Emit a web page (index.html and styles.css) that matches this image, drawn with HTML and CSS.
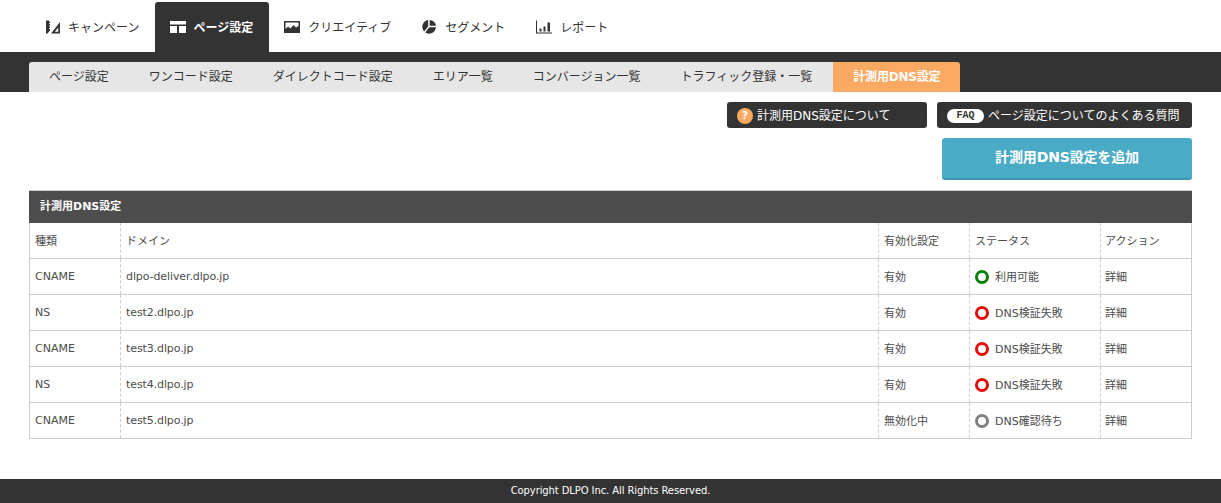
FILE: index.html
```html
<!DOCTYPE html>
<html lang="ja">
<head>
<meta charset="utf-8">
<title>計測用DNS設定</title>
<link rel="stylesheet" href="styles.css">
</head>
<body>
<header>
  <nav class="main-nav">
    <a class="main-tab pad-end">
      <svg class="nav-icon" viewBox="0 0 14 13"><path fill-rule="evenodd" d="M0 0h3v1h1v1.500H3v1h1V5H3v1h1v1.500H3v1h1V10L1.500 13H0z M5 13L14 1.500V13z M8.800 11.300h3.500V7z" fill="#333"/></svg>キャンペーン</a>
    <a class="main-tab active">
      <svg class="nav-icon wide" viewBox="0 0 16 12"><path d="M0 0h16v3.500H0z M0 5h7v7H0z M9 5h7v7H9z" fill="#fff"/></svg>ページ設定</a>
    <a class="main-tab">
      <svg class="nav-icon wide" viewBox="0 0 16 12"><path fill-rule="evenodd" d="M0 0h16v12H0z M1.500 1.500V8L4 5.500 6.500 7.500 9.500 4 12 6.500 14.500 5V1.500z" fill="#333"/></svg>クリエイティブ</a>
    <a class="main-tab pad-end">
      <svg class="nav-icon wide" viewBox="0 0 16 14"><path d="M7.200 0v6.500L3 11.500A7 7 0 0 1 7.200 0z M8.700 0A6.500 6.500 0 0 1 15 5.800H8.700z M8.300 7.300H15A7 7 0 0 1 4.200 12.500z" fill="#333"/></svg>セグメント</a>
    <a class="main-tab">
      <svg class="nav-icon wide" viewBox="0 0 16 13"><path d="M0 0h1v12h15v1H0z M3.500 8h2v3h-2z M7.500 6h2v5h-2z M11.500 2h2.500v9h-2.500z" fill="#333"/></svg>レポート</a>
  </nav>
  <nav class="sub-nav">
    <a class="sub-tab first">ページ設定</a>
    <a class="sub-tab">ワンコード設定</a>
    <a class="sub-tab">ダイレクトコード設定</a>
    <a class="sub-tab">エリア一覧</a>
    <a class="sub-tab">コンバージョン一覧</a>
    <a class="sub-tab traffic">トラフィック登録・一覧</a>
    <a class="sub-tab current">計測用DNS設定</a>
  </nav>
</header>
<main>
  <div class="help-row">
    <a class="help-btn about"><span class="q-mark">?</span>計測用DNS設定について</a>
    <a class="help-btn faq"><span class="faq-pill">FAQ</span>ページ設定についてのよくある質問</a>
  </div>
  <div class="add-row"><a class="add-btn">計測用DNS設定を追加</a></div>
  <section class="panel">
    <h2 class="panel-title">計測用DNS設定</h2>
    <table class="dns-table">
      <colgroup><col class="c-type"><col class="c-domain"><col class="c-enabled"><col class="c-status"><col class="c-action"></colgroup>
      <thead>
        <tr><th>種類</th><th>ドメイン</th><th>有効化設定</th><th>ステータス</th><th>アクション</th></tr>
      </thead>
      <tbody>
        <tr><td>CNAME</td><td class="domain">dlpo-deliver.dlpo.jp</td><td>有効</td><td><span class="ring ok"></span>利用可能</td><td>詳細</td></tr>
        <tr><td>NS</td><td class="domain">test2.dlpo.jp</td><td>有効</td><td><span class="ring fail"></span>DNS検証失敗</td><td>詳細</td></tr>
        <tr><td>CNAME</td><td class="domain">test3.dlpo.jp</td><td>有効</td><td><span class="ring fail"></span>DNS検証失敗</td><td>詳細</td></tr>
        <tr><td>NS</td><td class="domain">test4.dlpo.jp</td><td>有効</td><td><span class="ring fail"></span>DNS検証失敗</td><td>詳細</td></tr>
        <tr><td>CNAME</td><td class="domain">test5.dlpo.jp</td><td>無効化中</td><td><span class="ring wait"></span>DNS確認待ち</td><td>詳細</td></tr>
      </tbody>
    </table>
  </section>
</main>
<footer class="site-footer">Copyright DLPO Inc. All Rights Reserved.</footer>
</body>
</html>
```
FILE: styles.css
```css
* { box-sizing: border-box; }
html, body { margin: 0; padding: 0; }
body {
  width: 1221px;
  height: 503px;
  overflow: hidden;
  background: #fff;
  color: #333;
  font-family: "DejaVu Sans", "Noto Sans CJK JP", sans-serif;
  font-size: 11px;
  display: flex;
  flex-direction: column;
}
a { color: inherit; text-decoration: none; }

.main-nav {
  height: 52px;
  padding: 2px 0 0 31px;
  display: flex;
}
.main-tab {
  display: flex;
  align-items: center;
  height: 50px;
  padding: 0 15px 2px;
  font-size: 12px;
  color: #333;
  border-radius: 3px 3px 0 0;
}
.main-tab.pad-end { padding-right: 16px; }
.main-tab.active { background: #333; color: #fff; font-weight: 700; padding-right: 16px; }
.nav-icon { width: 14px; height: 14px; margin: 2px 8px 0 0; flex: none; }
.nav-icon.wide { width: 16px; }
.active .nav-icon.wide { margin-right: 7px; }

.sub-nav {
  height: 40px;
  background: #333;
  padding: 10px 0 0 29px;
  display: flex;
}
.sub-tab {
  height: 30px;
  line-height: 30px;
  padding: 0 20px;
  font-size: 12px;
  background: #e6e6e6;
  color: #333;
}
.sub-tab.first { border-radius: 3px 0 0 0; }
.sub-tab.traffic { padding-right: 21px; }
.sub-tab.current {
  width: 127px;
  padding: 0;
  text-align: center;
  letter-spacing: -0.2px;
  background: #f9a962;
  color: #fff;
  font-weight: 700;
  border-radius: 0 3px 0 0;
}

main { flex: 1; padding: 10px 29px 0; }
.help-row { display: flex; justify-content: flex-end; gap: 10px; }
.help-btn {
  height: 26px;
  padding-bottom: 2px;
  display: flex;
  align-items: center;
  background: #333;
  color: #fff;
  font-size: 12px;
  border-radius: 3px;
}
.help-btn.about { width: 200px; padding-left: 10px; }
.help-btn.faq { width: 255px; padding-left: 10px; }
.q-mark {
  width: 16px;
  height: 16px;
  margin: 4px 4px 0 0;
  border-radius: 50%;
  background: #f9a962;
  color: #fff;
  font-size: 11px;
  font-weight: 700;
  line-height: 16px;
  text-align: center;
}
.faq-pill {
  width: 37px;
  height: 14px;
  margin: 3px 4px 0 0;
  border-radius: 7px;
  background: #fff;
  color: #333;
  font-family: "Liberation Mono", monospace;
  font-size: 10px;
  font-weight: 700;
  line-height: 14px;
  text-align: center;
}
.add-row { display: flex; justify-content: flex-end; margin-top: 10px; }
.add-btn {
  width: 250px;
  height: 42px;
  line-height: 39px;
  text-align: center;
  background: #4aabc6;
  border-bottom: 2px solid #3e95ad;
  border-radius: 3px;
  color: #fff;
  font-size: 14px;
  font-weight: 700;
  letter-spacing: -0.15px;
}

.panel { margin-top: 10px; }
.panel-title {
  margin: 0;
  height: 33px;
  line-height: 31px;
  padding-left: 11px;
  background: #4d4d4d;
  border-top: 1px solid #ccc;
  color: #fff;
  font-size: 11px;
  font-weight: 700;
}
.dns-table {
  width: 100%;
  table-layout: fixed;
  border-collapse: collapse;
  border: 1px solid #ccc;
  border-top: 0;
}
.c-type { width: 91px; }
.c-enabled { width: 91px; }
.c-status { width: 131px; }
.c-action { width: 91px; }
.dns-table th, .dns-table td {
  height: 36px;
  padding: 0 5px;
  text-align: left;
  font-size: 11px;
  font-weight: 400;
  color: #4d4d4d;
  border-bottom: 1px solid #ccc;
  border-left: 1px dashed #ccc;
  white-space: nowrap;
}
.dns-table th { height: 35px; }
.dns-table th:first-child, .dns-table td:first-child { border-left: 0; }
.dns-table th:last-child, .dns-table td:last-child { padding-left: 4px; }
.dns-table td.domain { letter-spacing: -0.1px; }
.ring {
  display: inline-block;
  vertical-align: middle;
  width: 14px;
  height: 14px;
  margin: -1px 6px 0 0;
  border-radius: 50%;
  border: 3px solid;
}
.ring.ok { border-color: #0a7f0a; }
.ring.fail { border-color: #e60d0d; }
.ring.wait { border-color: #808080; }

.site-footer {
  height: 24px;
  line-height: 24px;
  background: #333;
  color: #fff;
  font-size: 10px;
  letter-spacing: -0.1px;
  text-align: center;
}
```
